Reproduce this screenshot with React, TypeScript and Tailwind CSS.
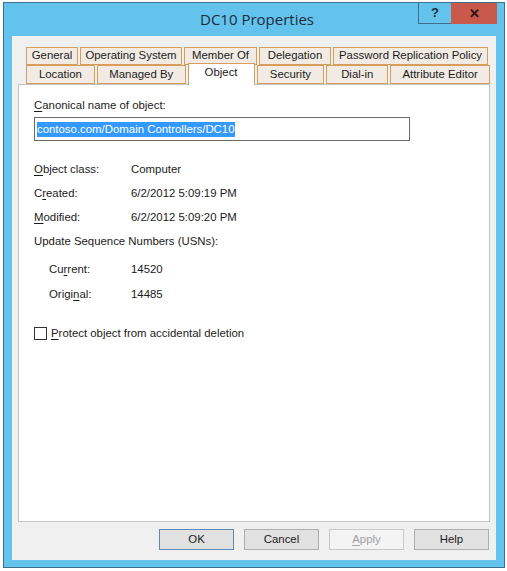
import type { JSX } from 'react';

/**
 * One tab header in the property sheet strip.
 */
interface TabSpec {
  label: string;
  width: string;
  selected?: boolean;
}

const ROW_ONE: TabSpec[] = [
  { label: 'General', width: 'w-[52px]' },
  { label: 'Operating System', width: 'w-[102px]' },
  { label: 'Member Of', width: 'w-[73px]' },
  { label: 'Delegation', width: 'w-[72px]' },
  { label: 'Password Replication Policy', width: 'w-[155px]' }
];

const ROW_TWO: TabSpec[] = [
  { label: 'Location', width: 'w-[69px]' },
  { label: 'Managed By', width: 'w-[89px]' },
  { label: 'Object', width: 'w-[67px]', selected: true },
  { label: 'Security', width: 'w-[68px]' },
  { label: 'Dial-in', width: 'w-[62px]' },
  { label: 'Attribute Editor', width: 'w-[100px]' }
];

/**
 * Label text with one accelerator letter underlined.
 */
function Accel({ text, at }: { text: string; at: number }): JSX.Element {
  return (
    <span>
      {text.slice(0, at)}
      <span className="underline underline-offset-2">{text.charAt(at)}</span>
      {text.slice(at + 1)}
    </span>
  );
}

function Tab({ tab, short }: { tab: TabSpec; short?: boolean }): JSX.Element {
  if (tab.selected) {
    return (
      <div
        className={`${tab.width} relative z-10 -mt-[2px] -mb-[1px] flex h-[22px] items-center justify-center border border-b-0 border-[#d89d5a] bg-white pb-[3px]`}
      >
        {tab.label}
      </div>
    );
  }
  return (
    <div
      className={`${tab.width} ${short ? 'h-[18px]' : 'h-[19px]'} flex items-center justify-center border border-[#d89d5a] bg-[#f1ebe4]`}
    >
      {tab.label}
    </div>
  );
}

function Field({
  label,
  value,
  indent
}: {
  label: JSX.Element;
  value: string;
  indent?: boolean;
}): JSX.Element {
  return (
    <div className="flex h-[24px] items-center">
      <div className={indent ? 'w-[97px] pl-[15px]' : 'w-[97px]'}>{label}</div>
      <div>{value}</div>
    </div>
  );
}

function DialogButton({
  children,
  primary,
  disabled
}: {
  children: JSX.Element | string;
  primary?: boolean;
  disabled?: boolean;
}): JSX.Element {
  const tone = disabled
    ? 'border-[#c8c8c8] bg-[#f4f4f4] text-[#a0a0a0]'
    : primary
      ? 'border-[#5e88b5] bg-[#e1e1e1] text-[#1a1a1a]'
      : 'border-[#adadad] bg-[#e1e1e1] text-[#1a1a1a]';
  return (
    <div className={`flex h-[21px] w-[75px] items-center justify-center border ${tone}`}>
      {children}
    </div>
  );
}

export default function App(): JSX.Element {
  return (
    <div className="h-[571px] w-[507px] bg-white pl-[3px] pt-[2px] font-['Liberation_Sans',sans-serif] text-[11.4px] text-[#1b1b1b]">
      <div className="flex h-[566px] w-[502px] flex-col border border-[#3e6f8f] bg-[#63c3ec]">
        {/* caption */}
        <div className="grid h-[33px] grid-cols-[1fr_auto_1fr] items-start">
          <div />
          <div className="pl-[6px] pt-[5px] font-['Open_Sans',sans-serif] text-[15px] text-[#1c2c3c]">
            DC10 Properties
          </div>
          <div className="flex justify-end pr-[7px]">
            <div className="flex h-[21px] w-[33px] items-center justify-center border-b border-l border-[#3e6f8f] text-[13px] font-bold text-[#1c2c3c]">
              ?
            </div>
            <div className="flex h-[21px] w-[46px] items-center justify-center bg-[#c9594b] text-[13px] font-bold text-[#2a1212]">
              ✕
            </div>
          </div>
        </div>

        {/* client area */}
        <div className="mx-[8px] mb-[7px] flex flex-1 flex-col bg-[#f0f0f0] px-[6px] pt-[11px]">
          <div className="flex flex-col pl-[8px]">
            <div className="flex gap-[2px]">
              {ROW_ONE.map((tab) => (
                <Tab key={tab.label} tab={tab} short />
              ))}
            </div>
            <div className="flex items-end gap-[2px]">
              {ROW_TWO.map((tab) => (
                <Tab key={tab.label} tab={tab} />
              ))}
            </div>
          </div>

          <div className="flex h-[438px] flex-col border border-[#c4c4c4] bg-white px-[15px] pt-[12px]">
            <div>
              <Accel text="Canonical name of object:" at={0} />
            </div>
            <div className="mt-[3px] flex h-[24px] w-[376px] items-center border border-[#6b6b6b] px-[2px]">
              <span className="bg-[#3399ff] leading-[15px] text-white">
                contoso.com/Domain Controllers/DC10
              </span>
            </div>

            <div className="mt-[16px] flex flex-col">
              <Field label={<Accel text="Object class:" at={0} />} value="Computer" />
              <Field label={<Accel text="Created:" at={1} />} value="6/2/2012 5:09:19 PM" />
              <Field label={<Accel text="Modified:" at={0} />} value="6/2/2012 5:09:20 PM" />
              <div className="flex h-[24px] items-center">Update Sequence Numbers (USNs):</div>
              <div className="mt-[4px] flex flex-col gap-[1px]">
                <Field label={<Accel text="Current:" at={2} />} value="14520" indent />
                <Field label={<Accel text="Original:" at={5} />} value="14485" indent />
              </div>
            </div>

            <div className="mt-[19px] flex items-center gap-[4px]">
              <div className="h-[13px] w-[13px] border border-[#333333] bg-white" />
              <Accel text="Protect object from accidental deletion" at={0} />
            </div>
          </div>

          <div className="mt-[7px] flex justify-end gap-[10px] pr-[1px]">
            <DialogButton primary>OK</DialogButton>
            <DialogButton>Cancel</DialogButton>
            <DialogButton disabled>
              <Accel text="Apply" at={0} />
            </DialogButton>
            <DialogButton>Help</DialogButton>
          </div>
        </div>
      </div>
    </div>
  );
}
